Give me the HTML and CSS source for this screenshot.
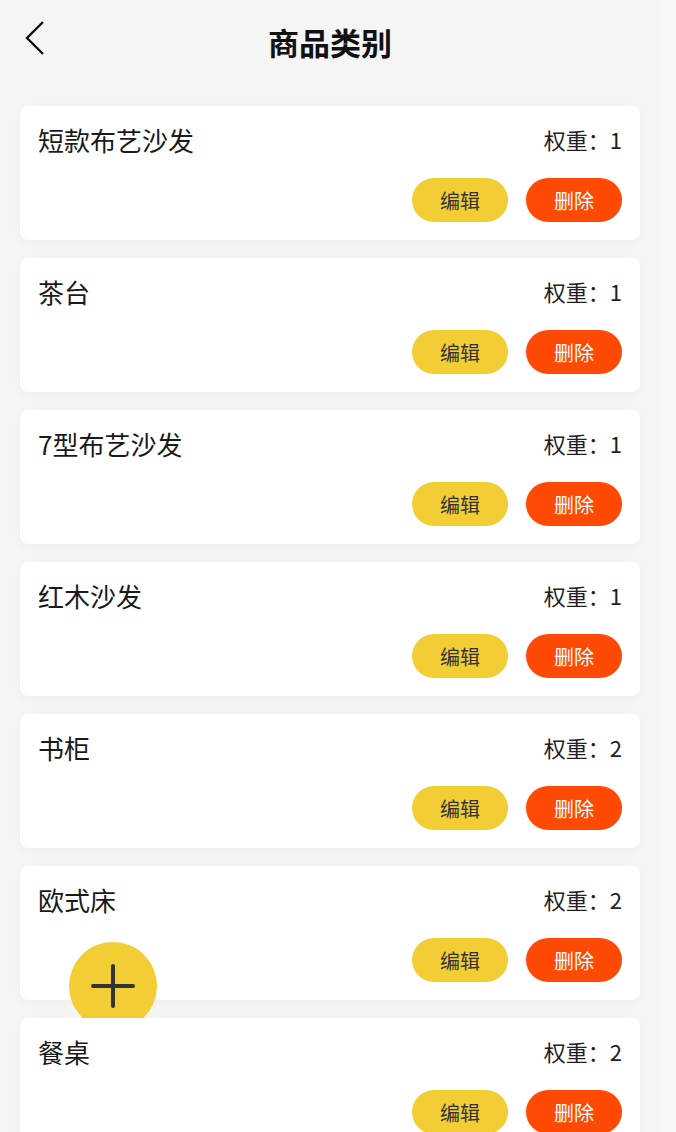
FILE: index.html
```html
<!DOCTYPE html>
<html lang="zh-CN">
<head>
    <meta charset="UTF-8">
    <meta name="viewport" content="width=device-width, initial-scale=1.0">
    <title>商品类别</title>
    <link rel="stylesheet" href="styles.css">
</head>
<body>
    <div class="page">
        <!-- Шапка -->
        <div class="header">
            <span class="back">
                <svg width="24" height="36" viewBox="0 0 24 36"><path d="M19 2 L3 18 L19 34" fill="none" stroke="#111" stroke-width="2.4"/></svg>
            </span>
            <div class="title">商品类别</div>
        </div>

        <div class="list">
            <div class="card">
                <div class="row"><span class="name">短款布艺沙发</span><span class="weight">权重：1</span></div>
                <div class="actions"><button class="btn edit">编辑</button><button class="btn del">删除</button></div>
            </div>
            <div class="card">
                <div class="row"><span class="name">茶台</span><span class="weight">权重：1</span></div>
                <div class="actions"><button class="btn edit">编辑</button><button class="btn del">删除</button></div>
            </div>
            <div class="card">
                <div class="row"><span class="name">7型布艺沙发</span><span class="weight">权重：1</span></div>
                <div class="actions"><button class="btn edit">编辑</button><button class="btn del">删除</button></div>
            </div>
            <div class="card">
                <div class="row"><span class="name">红木沙发</span><span class="weight">权重：1</span></div>
                <div class="actions"><button class="btn edit">编辑</button><button class="btn del">删除</button></div>
            </div>
            <div class="card">
                <div class="row"><span class="name">书柜</span><span class="weight">权重：2</span></div>
                <div class="actions"><button class="btn edit">编辑</button><button class="btn del">删除</button></div>
            </div>
            <div class="card">
                <div class="row"><span class="name">欧式床</span><span class="weight">权重：2</span></div>
                <div class="actions"><button class="btn edit">编辑</button><button class="btn del">删除</button></div>
                <!-- Кнопка добавления -->
                <div class="fab">
                    <svg width="44" height="44" viewBox="0 0 44 44"><path d="M22 2 V42 M2 22 H42" stroke="#333" stroke-width="4" stroke-linecap="round"/></svg>
                </div>
            </div>
            <div class="card">
                <div class="row"><span class="name">餐桌</span><span class="weight">权重：2</span></div>
                <div class="actions"><button class="btn edit">编辑</button><button class="btn del">删除</button></div>
            </div>
        </div>
    </div>
</body>
</html>
```

FILE: styles.css
```css
body {
    margin: 0;
    font-family: "Noto Sans CJK SC", "Noto Sans", sans-serif;
    background-color: #f7f7fa;
    color: #222;
}

.page {
    width: 660px;
    height: 1132px;
    overflow: hidden;
    background-color: #f5f5f6;
}

.header {
    height: 88px;
    display: flex;
    align-items: center;
    justify-content: center;
    position: relative;
}

.back {
    position: absolute;
    left: 24px;
    top: 20px;
}

.title {
    font-size: 31px;
    font-weight: bold;
    color: #111;
    margin-bottom: 6px;
}

.list {
    display: flex;
    flex-direction: column;
    gap: 18px;
    padding: 18px 20px;
}

.card {
    position: relative;
    background-color: #fff;
    border-radius: 8px;
    padding: 16px 18px 18px 18px;
    box-shadow: 0 2px 10px rgba(0, 0, 0, 0.04);
}

.row {
    display: flex;
    justify-content: space-between;
    align-items: center;
    height: 34px;
}

.name {
    font-size: 26px;
    color: #1a1a1a;
}

.weight {
    font-size: 22px;
    color: #222;
}

.actions {
    display: flex;
    justify-content: flex-end;
    gap: 18px;
    margin-top: 22px;
}

.btn {
    width: 96px;
    height: 44px;
    border: none;
    border-radius: 22px;
    font-family: inherit;
    font-size: 20px;
    padding: 0;
}

.edit {
    background-color: #f2cd33;
    color: #333;
}

.del {
    background-color: #ff4a05;
    color: #fff;
}

.fab {
    position: absolute;
    left: 49px;
    top: 76px;
    width: 88px;
    height: 88px;
    border-radius: 50%;
    background-color: #f2cd33;
    display: flex;
    align-items: center;
    justify-content: center;
}
```
